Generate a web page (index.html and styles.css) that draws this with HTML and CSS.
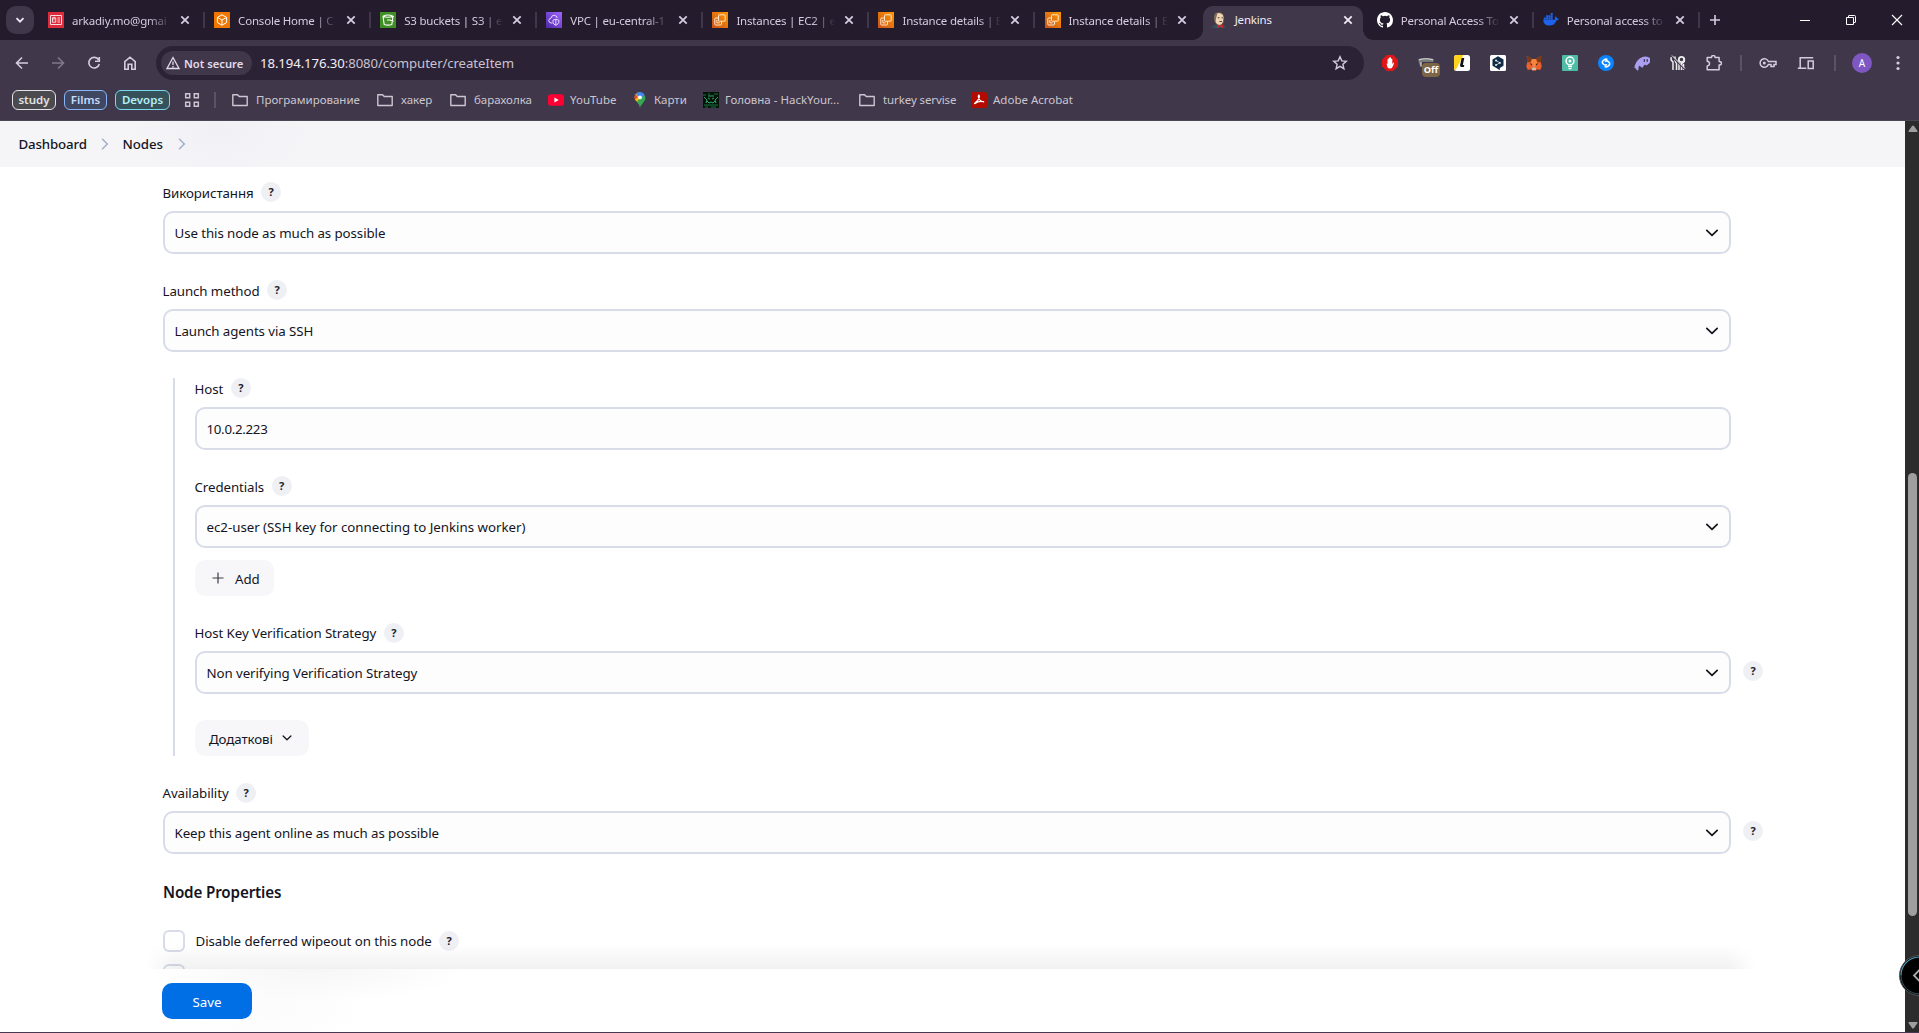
FILE: index.html
```html
<!DOCTYPE html>
<html lang="uk">
<head>
<meta charset="utf-8">
<title>Jenkins</title>
<link rel="stylesheet" href="styles.css">
</head>
<body>
<svg class="defs" width="0" height="0">
  <symbol id="i-x" viewBox="0 0 16 16"><path d="M4.300 4.300l7.400 7.400M11.700 4.300l-7.400 7.400" stroke="currentColor" stroke-width="1.800"/></symbol>
  <symbol id="i-folder" viewBox="0 0 16 16"><path d="M.8 2.800h4.800l1.600 1.700h8v9H.8z" fill="none" stroke="currentColor" stroke-width="1.400" stroke-linejoin="round"/></symbol>
  <symbol id="i-ec2" viewBox="0 0 16 16"><linearGradient id="g-ec2" x1="0" y1="1" x2="1" y2="0"><stop stop-color="#c8511b"/><stop offset="1" stop-color="#ff9900"/></linearGradient><path fill="url(#g-ec2)" d="M0 0h16v16H0z"/><path d="M6.500 3.500q0-.7.700-.7h5.300q.7 0 .7.700v5q0 .7-.7.700H7.200q-.7 0-.7-.7zM6.300 6H3.500q-.7 0-.7.700v5.600q0 .7.700.7h5.300q.7 0 .7-.7V9.500M4.900 8v2.900h2.800" fill="none" stroke="#ffe9cf" stroke-width="1"/></symbol>
  <symbol id="i-down" viewBox="0 0 16 16"><path d="M2.800 5.400L8 10.400l5.200-5" fill="none" stroke="currentColor" stroke-width="1.700" stroke-linecap="round" stroke-linejoin="round"/></symbol>
  <symbol id="i-right" viewBox="0 0 8 12"><path d="M1.500 1.200L6.300 6l-4.800 4.800" fill="none" stroke="currentColor" stroke-width="1.500" stroke-linecap="round"/></symbol>
</svg>

<header class="browser">
  <div class="tabstrip">
    <button class="tab-search"><svg width="12" height="12" viewBox="0 0 12 12"><path d="M2.500 4.200L6 7.700l3.500-3.500" fill="none" stroke="#eee8f4" stroke-width="1.800"/></svg></button>
    <div class="tabs">
      <div class="tab"><svg class="fav" viewBox="0 0 16 16"><path fill="#dd2c3c" d="M0 0h16v16H0z"/><path d="M2.500 3.500h11v9h-11zM4.500 5.800h3.200v4.400H4.500zM9.500 6h2.500M9.500 8h2.500M9.500 10h2.500M6 4.800v3" fill="none" stroke="#ffd9dc" stroke-width="1"/></svg><span class="title">arkadiy.mo@gmai</span><svg class="close"><use href="#i-x"/></svg></div>
      <div class="tab"><svg class="fav" viewBox="0 0 16 16"><path fill="#f07800" d="M0 0h16v16H0z"/><path d="M8 2.800l4.600 2.600v5.200L8 13.200l-4.600-2.600V5.400zM3.500 5.400L8 8l4.500-2.600M8 8v5" fill="none" stroke="#fff" stroke-width="1"/></svg><span class="title">Console Home | C</span><svg class="close"><use href="#i-x"/></svg></div>
      <div class="tab"><svg class="fav" viewBox="0 0 16 16"><path fill="#3f8f24" d="M0 0h16v16H0z"/><path d="M3 4.200l1.200 8.300q3.800 1.300 7.600 0L13 4.200M3 4.200q5 2 10 0q-5-2.400-10 0M7 8h3l3.500 1.500" fill="none" stroke="#fff" stroke-width="1.100"/></svg><span class="title">S3 buckets | S3 | e</span><svg class="close"><use href="#i-x"/></svg></div>
      <div class="tab"><svg class="fav" viewBox="0 0 16 16"><linearGradient id="g-vpc" x1="0" y1="1" x2="1" y2="0"><stop stop-color="#4d27a8"/><stop offset="1" stop-color="#a166ff"/></linearGradient><path fill="url(#g-vpc)" d="M0 0h16v16H0z"/><path d="M6.500 11H5Q2.500 10.500 2.800 8.400T5 6.200Q5.500 3.200 8.200 3.300T11.200 6M9.800 7.200l3 1v2.300q-.7 2-3 2.800-2.200-.8-2.800-2.800V8.200zM9.800 7.500v5.500" fill="none" stroke="#e6d9ff" stroke-width="1"/></svg><span class="title">VPC | eu-central-1</span><svg class="close"><use href="#i-x"/></svg></div>
      <div class="tab"><svg class="fav"><use href="#i-ec2"/></svg><span class="title">Instances | EC2 | e</span><svg class="close"><use href="#i-x"/></svg></div>
      <div class="tab"><svg class="fav"><use href="#i-ec2"/></svg><span class="title">Instance details | E</span><svg class="close"><use href="#i-x"/></svg></div>
      <div class="tab no-sep"><svg class="fav"><use href="#i-ec2"/></svg><span class="title">Instance details | E</span><svg class="close"><use href="#i-x"/></svg></div>
      <div class="tab active"><svg class="fav" viewBox="0 0 16 16"><path d="M1 16q.5-3.500 4-3.500h7q2 .5 2.500 3.500z" fill="#31515c"/><path d="M3 5Q3.500.6 7.900.6t5.100 4.600q.2 5.300-2.200 7.500-2.500 1.600-5-.2Q2.800 10 3 5z" fill="#efd3b5" stroke="#46352c" stroke-width=".8"/><path d="M3.300 4Q4.500 1.200 6.500 1L5 6.500 4.500 10 3 7z" fill="#7b6a55"/><path d="M6.800 5.800h1.700M10.500 5.800h1.500M8.500 9.500h2.500" stroke="#3a2b25" stroke-width=".9"/><path d="M6 12.600l3 1.200 3-1.200V16l-3-1.200L6 16z" fill="#d3262b"/></svg><span class="title">Jenkins</span><svg class="close"><use href="#i-x"/></svg></div>
      <div class="tab"><svg class="fav" viewBox="0 0 16 16"><path fill="#fff" d="M8 0C3.580 0 0 3.580 0 8c0 3.540 2.290 6.530 5.470 7.590.4.070.55-.17.55-.38 0-.19-.01-.82-.01-1.490-2.010.37-2.530-.49-2.690-.94-.09-.23-.48-.94-.82-1.130-.28-.15-.68-.52-.01-.53.63-.01 1.080.58 1.230.82.72 1.210 1.870.87 2.330.66.070-.52.28-.87.51-1.070-1.780-.2-3.640-.89-3.640-3.950 0-.87.31-1.590.82-2.150-.08-.2-.36-1.020.08-2.120 0 0 .67-.21 2.200.82a7.700 7.700 0 014 0c1.530-1.040 2.200-.82 2.200-.82.44 1.100.16 1.920.08 2.120.51.56.82 1.270.82 2.150 0 3.070-1.870 3.750-3.650 3.950.29.25.54.73.54 1.480 0 1.070-.01 1.930-.01 2.200 0 .21.15.46.55.38A8 8 0 0016 8c0-4.420-3.580-8-8-8z"/></svg><span class="title">Personal Access To</span><svg class="close"><use href="#i-x"/></svg></div>
      <div class="tab"><svg class="fav" viewBox="0 0 16 16"><path fill="#1d63ed" d="M.2 7.800h11.500q.7-1.400.2-2.600l.8-.9q1.200.9 1.300 2.200 1-.2 2 .3-.7 1.500-2.600 1.600-1.900 5.200-7.300 5.200Q.3 13.600.2 7.800zM.8 5.500h2v2h-2zM3.100 5.500h2v2h-2zM5.400 5.500h2v2h-2zM7.700 5.500h2v2h-2zM3.100 3.200h2v2h-2zM5.400 3.200h2v2h-2zM7.700 3.200h2v2h-2zM7.700.9h2v2h-2z"/></svg><span class="title">Personal access to</span><svg class="close"><use href="#i-x"/></svg></div>
    </div>
    <button class="new-tab"><svg width="12" height="12" viewBox="0 0 12 12"><path d="M6 1v10M1 6h10" stroke="#d6cbe0" stroke-width="1.600"/></svg></button>
    <div class="window-controls">
      <svg width="12" height="12" viewBox="0 0 12 12"><path d="M1 6.500h10" stroke="#fff"/></svg>
      <svg width="12" height="12" viewBox="0 0 12 12"><path d="M1.500 3.500h7v7h-7zM3.500 3V2q0-.5.500-.5h5.500q1 0 1 1V8q0 .5-.5.500H9" fill="none" stroke="#fff"/></svg>
      <svg width="12" height="12" viewBox="0 0 12 12"><path d="M1 1l10 10M11 1L1 11" stroke="#fff" stroke-width="1.100"/></svg>
    </div>
  </div>

  <div class="toolbar">
    <div class="nav">
      <svg viewBox="0 0 16 16"><path d="M14 8H3M8 2.500L2.500 8 8 13.500" fill="none" stroke="currentColor" stroke-width="1.600"/></svg>
      <svg class="dim" viewBox="0 0 16 16"><path d="M2 8h11M8 2.500L13.500 8 8 13.500" fill="none" stroke="currentColor" stroke-width="1.600"/></svg>
      <svg viewBox="0 0 16 16"><path d="M12.600 4.800A5.300 5.300 0 1013.300 9M13.300 2v4.300H9" fill="none" stroke="currentColor" stroke-width="1.600"/></svg>
      <svg viewBox="0 0 16 16"><path d="M2.800 14.200V6.600L8 2.200l5.200 4.400v7.600H9.800V9.300H6.200v4.900z" fill="none" stroke="currentColor" stroke-width="1.600"/></svg>
    </div>
    <div class="omnibox">
      <span class="secure"><svg width="14" height="14" viewBox="0 0 14 14"><path d="M7 1.500l6 11H1zM7 5.500V9M7 10v1.400" fill="none" stroke="currentColor" stroke-width="1.300"/></svg><b>Not secure</b></span>
      <span class="url"><i>18.194.176.30</i>:8080/computer/createItem</span>
      <svg class="star" width="16" height="16" viewBox="0 0 16 16"><path d="M8 1.800l1.800 4.100 4.500.4-3.400 3 1 4.400L8 11.400l-3.900 2.300 1-4.400-3.400-3 4.500-.4z" fill="none" stroke="currentColor" stroke-width="1.400"/></svg>
    </div>
    <div class="extensions">
      <svg viewBox="0 0 16 16"><path d="M4.700 0h6.600L16 4.700v6.600L11.300 16H4.700L0 11.300V4.700z" fill="#e11616"/><path d="M4.500 8.500l1 .5V4.500q.6-.8 1.100 0V3q.6-.8 1.200 0v-.5q.6-.7 1.200 0V4q.7-.8 1.300 0v5l1.300-1.500q.8 0 .4.900L10.500 12q-.6 1.500-2.500 1.500T5.400 12z" fill="#fff"/></svg>
      <span class="ext-off"><svg viewBox="0 0 16 16"><path d="M.5 4.500Q.5 3 8 3t7.500 1.500V7H3.500V12l-1.500-1L.5 7z" fill="#777b79"/><path d="M.8 5Q8 2.500 15.200 5M3 7v4.500" fill="none" stroke="#d5d8d6" stroke-width="1.100"/></svg><b>Off</b></span>
      <svg viewBox="0 0 16 16"><rect width="16" height="16" rx="2.500" fill="#fff"/><path d="M2.500 0H9.500L1.500 15.500Q0 15 0 13.500V2.500Q0 0 2.500 0z" fill="#ffd21e"/><path d="M7.600 3h2.700L8.800 10h1.500l-.5 2H7.500q-1.800 0-1.400-2z" fill="#111"/></svg>
      <svg viewBox="0 0 16 16"><rect width="16" height="16" rx="1.500" fill="#fff"/><path d="M8 1.300l5.500 3.200v6.300L9.800 13v2.200L8 14l-5.500-3.200V4.500z" fill="#0f2b46"/><path d="M6 5.500l4 2.300L6 10" fill="none" stroke="#fff" stroke-width=".7"/><circle cx="6" cy="5.500" r=".9" fill="#fff"/><circle cx="10" cy="7.800" r=".9" fill="#fff"/><circle cx="6" cy="10" r=".9" fill="#fff"/></svg>
      <svg viewBox="0 0 16 16"><path d="M.8.800L6 4h4l5.200-3.200-.3 6.700.8 4-1.500 3.500-3.200-.8-1.500 1.600h-3L5 14.200 1.800 15 .3 11.500l.8-4z" fill="#e8622a"/><path d="M.8.800L6 4 4.500 7 1.200 7.500zM15.200.8L10 4l1.500 3 3.300.5z" fill="#7c3a17"/><path d="M6 4h4l1 4-3 5-3-5z" fill="#f6843c"/><path d="M3.700 8.300l2.500.7-.5 1.400zM12.300 8.300L9.800 9l.5 1.400z" fill="#2a2230"/><path d="M6.300 12.500h3.400l.5 2.500H5.800z" fill="#c9b9ae"/></svg>
      <svg viewBox="0 0 16 16"><rect width="16" height="16" rx="1" fill="#4ebda6"/><circle cx="8" cy="6" r="3.900" fill="none" stroke="#fff" stroke-width="1.500"/><circle cx="8" cy="6" r="1.500" fill="#fff"/><path d="M6 11.500h4M6.500 13.600h3" stroke="#fff" stroke-width="1.300"/></svg>
      <svg viewBox="0 0 16 16"><circle cx="8" cy="8" r="8" fill="#0b84ff"/><path d="M8.800 4.200Q7 3.700 5.200 5.500T5.300 9 8.500 9.800M7.200 11.800q1.800.5 3.600-1.300T10.700 7 7.500 6.200" fill="none" stroke="#fff" stroke-width="1.600" stroke-linecap="round"/></svg>
      <svg viewBox="0 0 16 16"><path d="M0 13.500Q1.500 6 6 3.200T15 2.500 15.500 8 12.500 10.500Q11.500 9.500 10.500 10T9 12 6.500 11.500 4.500 13.500 2 14 0 13.500z" fill="#ab9ff2"/><path d="M10.300 4.700v1.600M13.200 4.700v1.600" stroke="#3b3152" stroke-width="1.300" stroke-linecap="round"/></svg>
      <svg viewBox="0 0 16 16"><path d="M1.500 2q-1.500 3 1.500 5v8M5 1.500v4l1.500 3v6.500M14 3q1.500 4-2.500 5.500V15M9 8v7M13.500 9v6" fill="none" stroke="#eee" stroke-width="1.500"/><circle cx="11.500" cy="4.500" r="2.700" fill="none" stroke="#eee" stroke-width="1.800"/><path d="M2 1.500l13 13" stroke="#403749" stroke-width="1.500"/><path d="M2 .5l13 13" stroke="#eee" stroke-width="1"/></svg>
      <svg class="line" viewBox="0 0 16 16"><path d="M1.200 2.500h4.300Q5.500.4 7.300.4t1.800 2.100h4v4q2.400 0 2.400 1.700T13.100 10v4.800H1.200V11q2.300-.3 2.300-2.400T1.200 6.300z" fill="none" stroke="currentColor" stroke-width="1.500" stroke-linejoin="round"/></svg>
    </div>
    <span class="vsep"></span>
    <svg class="key" width="18" height="16" viewBox="0 0 18 16"><path d="M9.400 6.500A4.300 4.300 0 109.400 9.500H12v2h3v-2h2v-3z" fill="none" stroke="currentColor" stroke-width="1.500"/><circle cx="5.300" cy="8" r="1.500" fill="currentColor"/></svg>
    <svg class="devices" width="18" height="16" viewBox="0 0 18 16"><path d="M3.200 13V2.800h13M.8 13.200h8.500M11.200 6h5v7.500h-5z" fill="none" stroke="currentColor" stroke-width="1.500"/></svg>
    <span class="vsep"></span>
    <span class="avatar">A</span>
    <svg class="dots" width="4" height="16" viewBox="0 0 4 16" fill="currentColor"><circle cx="2" cy="2.500" r="1.600"/><circle cx="2" cy="8" r="1.600"/><circle cx="2" cy="13.500" r="1.600"/></svg>
  </div>

  <div class="bookmarks">
    <b class="group study">study</b><b class="group films">Films</b><b class="group devops">Devops</b>
    <svg class="apps" width="16" height="16" viewBox="0 0 16 16"><path d="M1.700 1.700h4v4h-4zM10.300 1.700h4v4h-4zM1.700 10.300h4v4h-4zM10.300 10.300h4v4h-4z" fill="none" stroke="currentColor" stroke-width="1.500"/></svg>
    <span class="vsep"></span>
    <span class="bm bm-prog"><svg><use href="#i-folder"/></svg><span>Програмирование</span></span>
    <span class="bm bm-hak"><svg><use href="#i-folder"/></svg><span>хакер</span></span>
    <span class="bm bm-bar"><svg><use href="#i-folder"/></svg><span>барахолка</span></span>
    <span class="bm tight bm-yt"><svg viewBox="0 0 16 16"><rect y="2.300" width="16" height="11.400" rx="2.800" fill="#ff0033"/><path d="M6.400 5.500L10.700 8l-4.300 2.500z" fill="#fff"/></svg><span>YouTube</span></span>
    <span class="bm bm-maps"><svg viewBox="0 0 16 16"><path d="M8 16Q7.500 12.500 4.500 9.500l7-7Q13.500 3.500 13.500 6 13.500 8 11 11 8.500 13.500 8 16z" fill="#34a853"/><path d="M3.200 2.600Q5 .2 8 .2l3.300 1.600L5 9.800Q2.500 8 2.600 5z" fill="#fbbc04"/><path d="M3.300 2.500L6 5 2.800 7.500Q1.800 5 3.300 2.500z" fill="#ea4335"/><path d="M3.700 2Q5.500 0 8 0t4.700 2.500L9 6.500 6.200 4.300z" fill="#4285f4"/><circle cx="8" cy="5.400" r="1.900" fill="#fff"/></svg><span>Карти</span></span>
    <span class="bm tight bm-hyo"><svg viewBox="0 0 16 16"><path fill="#04140d" d="M0 0h16v16H0z"/><path d="M0 3h3M5 2h2M11 2h4M1 13h14M2 15h3M8 15h5" stroke="#15743f" stroke-width="1"/><path d="M1 5l3 3-1 3M15 5l-3 3 1 3M5 6l2 1M11 6L9 7M4 9l2 2 2-1 2 1 2-2M5 4h6" fill="none" stroke="#35a565" stroke-width="1"/></svg><span>Головна - HackYour...</span></span>
    <span class="bm bm-tur"><svg><use href="#i-folder"/></svg><span>turkey servise</span></span>
    <span class="bm tight bm-ado"><svg viewBox="0 0 16 16"><rect width="16" height="16" rx="2.500" fill="#b30b00"/><path d="M7.500 3q1.300 0 .7 2.500-.8 3.200-4.700 6M7.200 4q.5 5 5.600 6M4 11.500Q8 8.500 12.500 9.700" fill="none" stroke="#fff" stroke-width="1.200" stroke-linecap="round"/></svg><span>Adobe Acrobat</span></span>
  </div>
</header>

<div class="viewport">
  <main class="page">
    <nav class="breadcrumbs">
      <span class="crumb-dash">Dashboard</span><svg><use href="#i-right"/></svg><span class="crumb-nodes">Nodes</span><svg><use href="#i-right"/></svg>
    </nav>
    <form class="form">
      <div class="field">
        <div class="label"><span>Використання</span><a class="help">?</a></div>
        <div class="control select"><span>Use this node as much as possible</span><svg><use href="#i-down"/></svg></div>
      </div>
      <div class="field">
        <div class="label"><span>Launch method</span><a class="help">?</a></div>
        <div class="control select"><span>Launch agents via SSH</span><svg><use href="#i-down"/></svg></div>
      </div>
      <section class="nested">
        <div class="field">
          <div class="label"><span>Host</span><a class="help">?</a></div>
          <div class="control"><span class="host-value">10.0.2.223</span></div>
        </div>
        <div class="field">
          <div class="label"><span>Credentials</span><a class="help">?</a></div>
          <div class="control select"><span class="credential">ec2-user (SSH key for connecting to Jenkins worker)</span><svg><use href="#i-down"/></svg></div>
          <div class="button add"><svg width="12" height="12" viewBox="0 0 12 12"><path d="M6 .5v11M.5 6h11" stroke="#3c3c48" stroke-width="1.200"/></svg><span>Add</span></div>
        </div>
        <div class="field snug">
          <div class="label"><span>Host Key Verification Strategy</span><a class="help">?</a></div>
          <div class="row"><div class="control select"><span>Non verifying Verification Strategy</span><svg><use href="#i-down"/></svg></div><a class="help side">?</a></div>
        </div>
        <div class="button more"><span>Додаткові</span><svg width="12" height="12"><use href="#i-down"/></svg></div>
      </section>
      <div class="field snug">
        <div class="label"><span>Availability</span><a class="help">?</a></div>
        <div class="row"><div class="control select"><span>Keep this agent online as much as possible</span><svg><use href="#i-down"/></svg></div><a class="help side">?</a></div>
      </div>
      <h2>Node Properties</h2>
      <div class="check"><span class="box"></span><span class="check-text">Disable deferred wipeout on this node</span><a class="help">?</a></div>
      <div class="check"><span class="box"></span></div>
    </form>
    <footer class="savebar"><button class="save">Save</button></footer>
  </main>
  <aside class="scrollbar">
    <svg width="10" height="8" viewBox="0 0 10 8"><path d="M4 1q1-1 2 0l3.500 5q.4 1-.7 1H1.200Q.1 7 .5 6z" fill="#9f9f9f"/></svg>
    <span class="thumb"></span>
    <svg width="10" height="8" viewBox="0 0 10 8"><path d="M4 7q1 1 2 0l3.500-5q.4-1-.7-1H1.200Q.1 1 .5 2z" fill="#9f9f9f"/></svg>
  </aside>
  <div class="side-tool"><svg width="41" height="41" viewBox="0 0 41 41"><circle cx="20.500" cy="20.500" r="20" fill="#000" stroke="#555"/><path d="M2 20.500A18.500 18.500 0 0120.500 2" fill="none" stroke="#4f9fc0" stroke-width="1.200"/><path d="M2 20.500A18.500 18.500 0 0020.500 39" fill="none" stroke="#33555f" stroke-width="1"/><path d="M20.500 15l-5.500 5.500 5.500 5.500" fill="none" stroke="#aaa" stroke-width="1.800"/></svg></div>
</div>
</body>
</html>
```
FILE: styles.css
```css
* { box-sizing: border-box; }
body {
  margin: 0;
  width: 1919px;
  height: 1033px;
  overflow: hidden;
  font-family: "Noto Sans", "Open Sans", sans-serif;
  background: #fff;
  display: flex;
  flex-direction: column;
}
svg { flex: none; display: block; }
button { border: 0; padding: 0; font: inherit; }
.defs { position: absolute; }

/* browser chrome */
.browser { height: 121px; background: #40374b; border-bottom: 1px solid #4c4654; color: #d6cbe0; }
.tabstrip { height: 40px; background: #241c2d; display: flex; align-items: center; padding-left: 6px; }
.tab-search { width: 28px; height: 28px; border-radius: 10px; background: #40374b; display: flex; align-items: center; justify-content: center; }
.tabs { display: flex; margin-left: 5px; height: 100%; }
.tab { position: relative; width: 166.1px; display: flex; align-items: center; padding-left: 9px; font-size: 11.5px; letter-spacing: -.2px; }
.tab::after { content: ""; margin-left: 10px; width: 2px; height: 16px; background: #40374b; }
.tab.no-sep::after, .tab.active::after { background: none; }
.fav { width: 16px; height: 16px; }
.title { width: 103px; margin: 0 2px 0 8px; white-space: nowrap; -webkit-mask: linear-gradient(90deg, #000 76px, transparent 99px); mask: linear-gradient(90deg, #000 76px, transparent 99px); }
.close { width: 16px; height: 16px; }
.tab.active { background: #40374b; margin: 6px 5px 0 1px; padding-left: 8px; width: 160px; border-radius: 10px 10px 0 0; color: #f0eaf5; align-items: flex-start; }
.tab.active > * { margin-top: 6px; }
.tab.active .title { -webkit-mask: none; mask: none; }
.tab.active::before, .tab.active::after { content: ""; position: absolute; bottom: 0; width: 10px; height: 10px; margin: 0; }
.tab.active::before { left: -10px; background: radial-gradient(circle at 0 0, transparent 9.5px, #40374b 10px); }
.tab.active::after { right: -10px; background: radial-gradient(circle at 100% 0, transparent 9.5px, #40374b 10px); }
.new-tab { background: none; margin-left: 9px; }
.window-controls { display: flex; gap: 34px; margin-left: auto; padding-right: 16px; }

.toolbar { height: 46px; display: flex; align-items: center; border-radius: 8px 8px 0 0; }
.nav { display: flex; gap: 20px; padding-left: 14px; }
.nav svg, .extensions svg { width: 16px; height: 16px; }
.dim { color: #81788b; }
.omnibox { width: 1208px; height: 34px; margin-left: 18px; border-radius: 17px; background: #2b2335; display: flex; align-items: center; padding: 0 16px 0 5px; }
.secure { width: 91px; height: 24px; border-radius: 12px; background: #40374b; display: flex; align-items: center; gap: 4px; padding-left: 5px; color: #e4dbec; font-size: 11.2px; white-space: nowrap; }
.secure b { font-weight: 600; }
.url { margin-left: 8px; font-size: 13.2px; letter-spacing: -.1px; color: #c9c1d0; white-space: nowrap; }
.url i { font-style: normal; color: #f2eef5; }
.star { margin-left: auto; }
.extensions { display: flex; gap: 20px; margin-left: 18px; }
.ext-off { position: relative; width: 16px; height: 16px; }
.ext-off b { position: absolute; left: 4px; top: 8px; width: 18px; height: 14px; border-radius: 4px; background: #7d6547; color: #fff; font-size: 9.3px; line-height: 14px; text-align: center; }
.vsep { width: 2px; height: 16px; background: #5c5267; }
.extensions + .vsep { margin-left: 18px; }
.key { margin-left: 17px; }
.devices { margin-left: 20px; }
.devices + .vsep { margin-left: 19px; }
.avatar { width: 20px; height: 20px; margin-left: 16px; border-radius: 50%; background: #7e57c2; color: #fff; font-size: 10px; line-height: 20px; text-align: center; }
.dots { margin-left: 24px; }

.bookmarks { height: 34px; display: flex; align-items: center; padding: 0 0 6px 12px; font-size: 11.5px; color: #cbc6cf; }
.group { height: 20px; border: 1px solid; border-radius: 6px; font-size: 11.5px; font-weight: 600; line-height: 17px; text-align: center; margin-right: 8px; }
.study { width: 44px; color: #e2e3e3; background: #4b4b4f; }
.films { width: 43px; color: #c5dafc; border-color: #8ab4f8; background: #3f4860; }
.devops { width: 55px; color: #b3f0f5; border-color: #78d9ec; background: #37515a; }
.apps { margin-left: 6px; }
.bookmarks .vsep { margin: 0 16px 0 14px; }
.bm { display: flex; align-items: center; gap: 8px; white-space: nowrap; }
.bm span { padding-bottom: 1px; }
.bm svg { width: 16px; height: 16px; }
.tight { gap: 6px; }
.bm-prog { width: 145px; }
.bm-hak { width: 73px; }
.bm-bar { width: 98px; }
.bm-yt { width: 84px; }
.bm-maps { width: 71px; gap: 6px; }
.bm-hyo { width: 156px; }
.bm-tur { width: 112px; letter-spacing: -.1px; }

/* web page */
.viewport { position: relative; height: 912px; display: flex; border-bottom: 1px solid #453850; }
.page { width: 1905px; height: 911px; position: relative; overflow: hidden; color: #14141f; font-size: 13.3px; letter-spacing: -.08px; }
.breadcrumbs { height: 46px; display: flex; align-items: center; padding-left: 18.5px; font-weight: 500; background: radial-gradient(ellipse 90px 50px at 220px 10px, #f1f1f5, transparent), #f5f5f8; }
.breadcrumbs svg { width: 8px; height: 12px; color: #9fb0cc; margin: 0 14px; }
.crumb-dash { width: 68px; letter-spacing: -.15px; }
.crumb-nodes { width: 41px; }
.form { width: 1568px; margin: 15px 0 0 163px; }
.field { margin-bottom: 26px; }
.label { height: 20px; margin-bottom: 9px; display: flex; align-items: center; gap: 7.5px; }
.snug .label { margin-bottom: 8px; }
.label span { padding-top: 2px; margin-left: -.5px; white-space: nowrap; }
.snug .label span { padding-top: 0; }
.help { flex: none; width: 20px; height: 20px; border-radius: 50%; background: #eef0f4; font-size: 11px; font-weight: 700; line-height: 20px; text-align: center; color: #22222c; }
.control { width: 100%; height: 43px; border: 2px solid #d7dce8; border-radius: 10px; background: #fdfdfd; display: flex; align-items: center; justify-content: space-between; padding: 0 9px 0 9.5px; flex: none; white-space: nowrap; }
.control svg { width: 16px; height: 16px; }
.host-value { letter-spacing: -.3px; }
.credential { letter-spacing: -.02px; }
.row { display: flex; align-items: center; }
.side { margin: -3px -32px 0 12px; }
.nested { margin: 0 0 27px 10px; padding-left: 20px; border-left: 2px solid #d7dce8; }
.button { height: 36px; border-radius: 10px; background: #f7f7f9; display: flex; align-items: center; }
.button span { padding-top: 2px; }
.add { width: 79px; margin: 12px 0 27px; padding-left: 17px; gap: 11px; }
.more { width: 114px; padding-left: 14px; gap: 8px; }
h2 { font-size: 15.2px; font-weight: 600; line-height: 22px; margin: 27px 0 27px; letter-spacing: -.15px; }
.check { height: 22px; display: flex; align-items: center; margin-bottom: 12px; }
.box { width: 22px; height: 22px; border: 2px solid #d7dce8; border-radius: 6px; background: #fff; margin-right: 10.5px; }
.check-text { width: 237px; margin-right: 6.5px; white-space: nowrap; }
.savebar { position: absolute; left: 0; right: 0; bottom: 0; height: 63px; padding: 14px 0 0 162px; background: radial-gradient(ellipse 160px 34px at 310px 0, #f6f6f7, transparent), radial-gradient(ellipse 100px 40px at 270px 40px, #fbfbfb, transparent), #fff; }
.savebar::before { content: ""; position: absolute; left: 146px; top: -25px; width: 1609px; height: 25px; background: linear-gradient(transparent, rgba(0,0,0,.055)); -webkit-mask: linear-gradient(90deg, transparent, #000 28px calc(100% - 28px), transparent); mask: linear-gradient(90deg, transparent, #000 28px calc(100% - 28px), transparent); }
.save { width: 90px; height: 36px; padding-top: 2px; border-radius: 10px; background: #006fe6; color: #fff; font-size: 13.3px; display: block; }
.scrollbar { width: 14px; background: #2c2c2c; display: flex; flex-direction: column; align-items: center; padding: 4px 0 3px 1px; }
.thumb { width: 9px; height: 443px; margin: 340px 0 auto; border-radius: 5px; background: #9f9f9f; }
.side-tool { position: absolute; left: 1899px; top: 834px; width: 20px; height: 41px; overflow: hidden; }
```
